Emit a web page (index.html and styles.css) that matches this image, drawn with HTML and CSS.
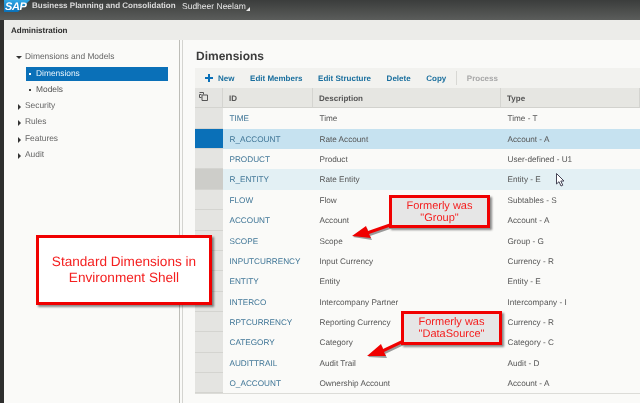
FILE: index.html
```html
<!DOCTYPE html>
<html lang="en">
<head>
<meta charset="utf-8">
<title>Dimensions</title>
<link rel="stylesheet" href="styles.css">
</head>
<body>
<div class="app">
  <header class="shell">
    <svg class="logo" width="26" height="12" viewBox="0 0 26 12"><defs><linearGradient id="sapg" x1="0" y1="0" x2="0" y2="1"><stop offset="0" stop-color="#2fa8e6"/><stop offset="1" stop-color="#0a70b8"/></linearGradient></defs><polygon points="0,0 26,0 14,12 0,12" fill="url(#sapg)"/></svg>
    <span class="logo-text">SAP</span>
    <span class="app-name">Business Planning and Consolidation</span>
    <span class="user">Sudheer Neelam</span>
    <svg class="user-caret" width="4" height="4" viewBox="0 0 4 4"><polygon points="4,0 4,4 0,4" fill="#e8e8e8"/></svg>
  </header>
  <div class="workspace">
    <div class="title-bar">Administration</div>
    <div class="panels">
      <nav class="nav">
        <div class="nav-item"><span class="tri-open"></span>Dimensions and Models</div>
        <div class="nav-sub active"><span class="dot"></span>Dimensions</div>
        <div class="nav-sub"><span class="dot"></span>Models</div>
        <div class="nav-item"><span class="tri-closed"></span>Security</div>
        <div class="nav-item"><span class="tri-closed"></span>Rules</div>
        <div class="nav-item"><span class="tri-closed"></span>Features</div>
        <div class="nav-item"><span class="tri-closed"></span>Audit</div>
      </nav>
      <div class="splitter"></div>
      <main class="main">
        <h1 class="heading">Dimensions</h1>
        <div class="toolbar">
          <svg class="plus" width="8" height="8" viewBox="0 0 8 8"><path d="M3 0h2v3h3v2H5v3H3V5H0V3h3z" fill="#0a70b8"/></svg>
          <span class="tool tool-new">New</span>
          <span class="tool">Edit Members</span>
          <span class="tool">Edit Structure</span>
          <span class="tool">Delete</span>
          <span class="tool">Copy</span>
          <span class="tool-sep"></span>
          <span class="tool tool-off">Process</span>
        </div>
        <div class="grid">
          <div class="head sel"><svg width="9" height="9" viewBox="0 0 9 9"><path d="M.5.5h4v2M2.5 2.500h-2v3h2M3 3h5.500v5.500H3z" fill="none" stroke="#555" stroke-width="1"/></svg></div>
          <div class="head">ID</div><div class="head">Description</div><div class="head">Type</div>

          <div class="sel"></div><div class="id">TIME</div><div>Time</div><div>Time - T</div>
          <div class="sel on"></div><div class="id r-sel">R_ACCOUNT</div><div class="r-sel">Rate Account</div><div class="r-sel">Account - A</div>
          <div class="sel"></div><div class="id">PRODUCT</div><div>Product</div><div>User-defined - U1</div>
          <div class="sel hov"></div><div class="id r-hov">R_ENTITY</div><div class="r-hov">Rate Entity</div><div class="r-hov">Entity - E</div>
          <div class="sel"></div><div class="id">FLOW</div><div>Flow</div><div>Subtables - S</div>
          <div class="sel"></div><div class="id">ACCOUNT</div><div>Account</div><div>Account - A</div>
          <div class="sel"></div><div class="id">SCOPE</div><div>Scope</div><div>Group - G</div>
          <div class="sel"></div><div class="id">INPUTCURRENCY</div><div>Input Currency</div><div>Currency - R</div>
          <div class="sel"></div><div class="id">ENTITY</div><div>Entity</div><div>Entity - E</div>
          <div class="sel"></div><div class="id">INTERCO</div><div>Intercompany Partner</div><div>Intercompany - I</div>
          <div class="sel"></div><div class="id">RPTCURRENCY</div><div>Reporting Currency</div><div>Currency - R</div>
          <div class="sel"></div><div class="id">CATEGORY</div><div>Category</div><div>Category - C</div>
          <div class="sel"></div><div class="id">AUDITTRAIL</div><div>Audit Trail</div><div>Audit - D</div>
          <div class="sel"></div><div class="id">O_ACCOUNT</div><div>Ownership Account</div><div>Account - A</div>
        </div>
      </main>
    </div>
  </div>

  <svg class="cursor" width="9" height="14" viewBox="0 0 9 14"><path d="M.5.5v10.500l2.500-2.300 2 4.300 1.800-.8-2-4.200h3.200z" fill="#fff" stroke="#445" stroke-width="1"/></svg>

  <svg class="arrows" width="640" height="403" viewBox="0 0 640 403">
    <g class="arrow-shadow"><path d="M392 225 L369 233 L367 228 L353 237 L372 240 L370 236 L393 228z"/><path d="M403 342 L384 351 L382 346 L368 357 L387 358 L385 354 L404 345z"/></g>
    <g class="arrow"><path d="M391 223 L368 231 L366 226 L352 236 L371 238 L369 234 L392 226z"/><path d="M402 340 L383 349 L381 344 L367 356 L386 356 L384 352 L403 343z"/></g>
  </svg>

  <div class="callout callout-white">Standard Dimensions in<br>Environment Shell</div>
  <div class="callout callout-grey callout-group">Formerly was<br>"Group"</div>
  <div class="callout callout-grey callout-source">Formerly was<br>"DataSource"</div>
</div>
</body>
</html>
```
FILE: styles.css
```css
* { box-sizing: border-box; }
html, body { margin: 0; padding: 0; }
body { width: 640px; height: 403px; overflow: hidden; font-family: "Liberation Sans", Arial, sans-serif; }
.app { position: relative; width: 640px; height: 403px; background: #2e2f2e; display: flex; flex-direction: column; overflow: hidden; filter: blur(0.35px); text-rendering: geometricPrecision; }

.shell { position: relative; height: 20px; flex: none; display: flex; align-items: center; background: linear-gradient(#3b3d3c, #5b5d5b); color: #e6e6e6; font-size: 8.5px; }
.logo { position: absolute; left: 4px; top: 0; }
.logo-text { position: absolute; left: 5px; top: 1px; line-height: 13px; font-size: 11px; font-weight: bold; font-style: italic; color: #fff; letter-spacing: -0.4px; }
.app-name { position: absolute; left: 32px; top: 0; line-height: 11px; font-weight: bold; color: #dcdcdc; font-size: 8px; }
.user { position: absolute; left: 182px; top: 1px; line-height: 11px; font-size: 8.5px; }
.user-caret { position: absolute; left: 246px; top: 7px; }

.workspace { flex: 1; margin-left: 4px; display: flex; flex-direction: column; min-height: 0; background: #fafaf8; }
.title-bar { height: 20px; flex: none; background: #ecece9; font-size: 8px; font-weight: bold; color: #2a2a2a; line-height: 21px; padding-left: 7px; }
.panels { flex: 1; display: flex; min-height: 0; }

.nav { width: 175px; flex: none; background: #fafaf8; padding-top: 8px; font-size: 8.4px; color: #666; }
.nav-item { height: 16.330px; line-height: 16px; padding-left: 21px; position: relative; }
.nav-sub { height: 16.330px; line-height: 16px; padding-left: 32px; position: relative; color: #555; }
.nav-sub.active { margin-left: 21.500px; margin-right: -0.500px; height: 14.300px; margin-top: 2.700px; margin-bottom: -0.670px; line-height: 13px; padding-left: 10.500px; width: 142px; background: #0a70b8; color: #e8f4fb; }
.dot { position: absolute; left: 25px; top: 8px; width: 2px; height: 2px; background: #444; }
.nav-sub.active .dot { left: 3px; top: 6px; background: #fff; }
.tri-open { position: absolute; left: 12px; top: 8px; border-style: solid; border-width: 3px 3px 0; border-color: #333 transparent transparent; }
.tri-closed { position: absolute; left: 14px; top: 7px; border-style: solid; border-width: 3px 0 3px 3px; border-color: transparent transparent transparent #333; }

.splitter { width: 4px; flex: none; background: #fafaf8; border-left: 1px solid #bdbdb8; border-right: 1px solid #d4d4d0; }

.main { flex: 1; min-width: 0; padding-left: 12px; background: #fafaf8; }
.heading { margin: 0; height: 28px; padding: 9px 0 0 1px; font-size: 12px; line-height: 15px; font-weight: bold; color: #3c3c3c; }
.toolbar { height: 20px; display: flex; align-items: center; background: #f2f2ef; color: #1a6f9e; font-size: 8px; font-weight: bold; padding-left: 10px; }
.plus { margin-right: 5px; }
.tool { margin-right: 15.600px; }
.tool-sep { width: 1px; height: 14px; background: #d8d8d4; margin-left: -6px; margin-right: 10px; }
.tool-off { color: #a8a8a8; }

.grid { display: grid; grid-template-columns: 28px 90px 188px 1fr; grid-auto-rows: 20.360px; font-size: 8.2px; line-height: 21px; color: #555; border-bottom: 1px solid #dcdcd8; }
.grid > div { padding-left: 6.500px; white-space: nowrap; }
.grid > .head { background: #e6e6e2; border-bottom: 1px solid #d2d2ce; border-right: 1px solid #d4d4d0; font-weight: bold; color: #555; font-size: 8px; padding-left: 6px; height: 20px; }
.grid > .sel { background: #e4e4e1; border-bottom: 1px solid #d4d4d0; padding: 0; }
.grid > .head.sel { padding: 4px 0 0 4px; line-height: 9px; }
.grid > .sel.on { background: #0a70b8; }
.grid > .sel.hov { background: #cdcdc9; }
.id { color: #3f7596; }
.r-sel { background: #c6e2f0; }
.r-hov { background: #e3f0f4; }

.cursor { position: absolute; left: 556px; top: 173px; }
.arrows { position: absolute; left: 0; top: 0; pointer-events: none; }
.arrow { fill: #f00000; }
.arrow-shadow { fill: #999; }

.callout { position: absolute; border: 3px solid #f00000; color: #f42020; text-align: center; box-shadow: 2px 2px 2px rgba(0, 0, 0, .45); display: flex; align-items: center; justify-content: center; line-height: 12px; }
.callout-white { left: 36px; top: 235px; width: 176px; height: 70px; background: #fff; font-size: 13.600px; line-height: 16px; }
.callout-grey { background: #e6e6e6; font-size: 11px; }
.callout-group { left: 389px; top: 195px; width: 101px; height: 33px; }
.callout-source { left: 401px; top: 311px; width: 101px; height: 34px; }
```
